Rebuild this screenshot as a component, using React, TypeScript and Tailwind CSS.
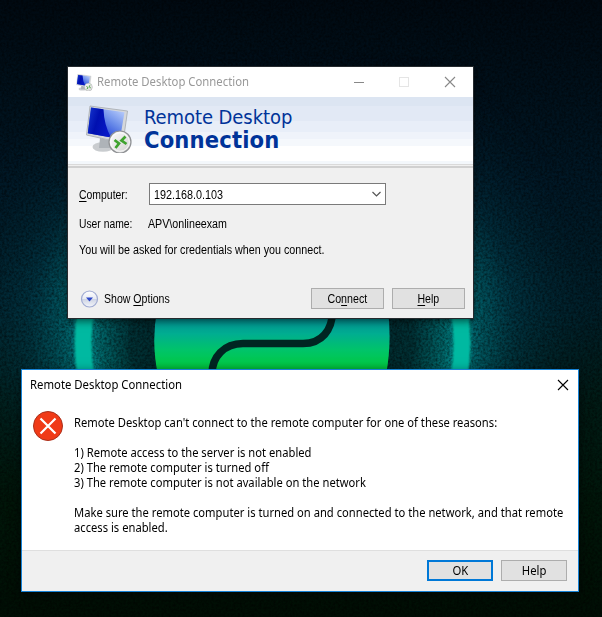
import type { ReactNode } from "react";

const segoe = "font-['Noto_Sans','Open_Sans',sans-serif]";
const sans = "font-['Liberation_Sans',Arial,sans-serif]";
const tahoma = "font-['DejaVu_Sans_Condensed','DejaVu_Sans',sans-serif]";

function Wallpaper() {
  return (
    <svg className="absolute inset-0" width="602" height="617" viewBox="0 0 602 617" aria-hidden="true">
      <defs>
        <linearGradient id="sky" x1="0" y1="0" x2="0" y2="1">
          <stop offset="0" stopColor="#000a12" />
          <stop offset="0.3" stopColor="#001826" />
          <stop offset="0.5" stopColor="#00202a" />
          <stop offset="0.65" stopColor="#001c16" />
          <stop offset="0.82" stopColor="#00170a" />
          <stop offset="1" stopColor="#000f05" />
        </linearGradient>
        <radialGradient id="halo" gradientUnits="userSpaceOnUse" cx="272" cy="335" r="330">
          <stop offset="0.3" stopColor="#003f42" stopOpacity="0.3" />
          <stop offset="0.45" stopColor="#00575b" stopOpacity="0.6" />
          <stop offset="0.56" stopColor="#009092" stopOpacity="0.9" />
          <stop offset="0.63" stopColor="#006e78" stopOpacity="0.75" />
          <stop offset="0.74" stopColor="#004a5c" stopOpacity="0.45" />
          <stop offset="1" stopColor="#002030" stopOpacity="0" />
        </radialGradient>
        <linearGradient id="fade" x1="0" y1="0" x2="0" y2="1">
          <stop offset="0.08" stopColor="#000" />
          <stop offset="0.46" stopColor="#fff" />
          <stop offset="0.6" stopColor="#fff" />
          <stop offset="0.78" stopColor="#111" />
          <stop offset="0.95" stopColor="#000" />
        </linearGradient>
        <mask id="haloMask">
          <rect width="602" height="617" fill="url(#fade)" />
        </mask>
        <linearGradient id="emblem" gradientUnits="userSpaceOnUse" x1="0" y1="318" x2="0" y2="370">
          <stop offset="0" stopColor="#009296" />
          <stop offset="0.3" stopColor="#00ad91" />
          <stop offset="0.62" stopColor="#00c469" />
          <stop offset="0.85" stopColor="#00c84d" />
          <stop offset="1" stopColor="#00b936" />
        </linearGradient>
        <filter id="grain" x="0" y="0" width="100%" height="100%">
          <feTurbulence type="fractalNoise" baseFrequency="0.42" numOctaves="2" seed="4" />
          <feColorMatrix values="0 0 0 0 0  0 0 0 0 0  0 0 0 0 0  1.8 0 0 0 -0.6" />
        </filter>
        <filter id="soft"><feGaussianBlur stdDeviation="0.8" /></filter>
      </defs>
      <rect width="602" height="617" fill="url(#sky)" />
      <rect width="602" height="617" fill="url(#halo)" mask="url(#haloMask)" />
      <ellipse cx="272" cy="343" rx="145" ry="90" fill="#002b2d" opacity="0.55" filter="url(#soft)" />
      <rect width="602" height="617" filter="url(#grain)" opacity="0.55" />
      <circle cx="272.5" cy="343" r="189.5" fill="none" stroke="#00b9a1" strokeWidth="17" filter="url(#soft)" />
      <path d="M157 310Q151 343 158 375H386Q392 343 388 310Z" fill="url(#emblem)" />
      <path d="M212 374C212 357 224 343.5 243 343.5H303C322 343.5 332 330 332.5 312" fill="none" stroke="#002522" strokeWidth="7.5" />
    </svg>
  );
}

function Monitor({ size }: { size: number }) {
  return (
    <svg width={size} height={size} viewBox="0 0 48 48" aria-hidden="true" className="shrink-0">
      <defs>
        <linearGradient id="screen" gradientUnits="userSpaceOnUse" x1="18" y1="30" x2="36" y2="4">
          <stop offset="0" stopColor="#2748d8" />
          <stop offset="0.5" stopColor="#6c8eea" />
          <stop offset="1" stopColor="#b9cdfb" />
        </linearGradient>
        <linearGradient id="deep" x1="0" y1="0" x2="1" y2="0.4">
          <stop offset="0" stopColor="#1738cf" />
          <stop offset="0.5" stopColor="#0010b0" />
          <stop offset="1" stopColor="#0718c6" />
        </linearGradient>
        <linearGradient id="badge" x1="0" y1="0" x2="1" y2="1">
          <stop offset="0" stopColor="#fff" />
          <stop offset="1" stopColor="#cfcfcf" />
        </linearGradient>
      </defs>
      <ellipse cx="18" cy="42" rx="10.500" ry="4.800" fill="#c9cccf" />
      <path d="M15 33L27 36L25 43H14Z" fill="#aeb3b8" />
      <path d="M5 1L42.500 6L38 38L1.500 30Z" fill="#d5d7da" stroke="#a5a9ae" strokeWidth="0.8" />
      <path d="M6 2.500L39.500 7.300L35 34L2.800 28.300Z" fill="url(#screen)" />
      <path d="M6 2.500L18.500 4.300Q19 20 26 32.400L2.800 28.300Z" fill="url(#deep)" />
      <circle cx="35" cy="37" r="11" fill="url(#badge)" stroke="#8f9194" strokeWidth="1.2" />
      <circle cx="35" cy="37" r="9.300" fill="none" stroke="#fff" strokeWidth="0.8" />
      <path d="M29.500 35L34 38.500L30.500 43M40.500 31.500L36.500 35.500L41.500 39" fill="none" stroke="#3fa32f" strokeWidth="2.700" />
    </svg>
  );
}

function CloseMark({ color }: { color: string }) {
  return (
    <svg width="12" height="12" viewBox="0 0 12 12" aria-hidden="true">
      <path d="M1 1L11 11M11 1L1 11" stroke={color} strokeWidth="1.1" fill="none" />
    </svg>
  );
}

function Button({ children, className }: { children: ReactNode; className: string }) {
  return (
    <button type="button" className={`flex h-[21px] items-center justify-center bg-[#e1e1e1] ${className}`}>
      {children}
    </button>
  );
}

function ConnectionWindow() {
  return (
    <section className={`absolute top-[67px] left-[68px] flex h-[251px] w-[405px] flex-col bg-[#f0f0f0] text-[12px] text-black shadow-[0_0_0_1px_#252a2e,0_3px_8px_#0009] ${sans}`}>
      <header className={`flex h-[30px] shrink-0 items-center bg-white pl-2 text-[#999] ${segoe}`}>
        <Monitor size={17} />
        <h1 className="ml-1 flex-1 origin-left scale-x-[0.944]">Remote Desktop Connection</h1>
        <div className="mr-[35px] h-px w-[10px] bg-[#888]" />
        <div className="mr-[35px] size-[10px] border border-[#e5e5e5]" />
        <div className="mr-[17px]"><CloseMark color="#888" /></div>
      </header>
      <div className="flex h-[67px] shrink-0 bg-[linear-gradient(#dce5f2_0_9px,#e2e9f5_9px_24px,#e8eef8_24px_35px,#eff3fa_35px_42px,#f5f8fc_42px_49px,#fff_49px_64px,#f3f7fb_64px)] pl-[17px]">
        <div className="mt-[8px]"><Monitor size={48} /></div>
        <div className={`mt-[9px] ml-[11px] text-[#003399] ${tahoma}`}>
          <div className="text-[20px] leading-[23px] tracking-[-0.07px]">Remote Desktop</div>
          <div className="text-[23.5px] leading-[22px] font-bold tracking-[0.15px]">Connection</div>
        </div>
      </div>
      <div className="mb-[1px] h-px shrink-0 bg-[#dadada]" />
      <div className="h-[2px] shrink-0 bg-[#d0d0d0]" />
      <div className="flex flex-1 flex-col pl-[11px]">
        <div className="mt-[15px] flex h-[22px] items-center">
          <span className="w-[70px] origin-left scale-x-[0.87] pt-[2px]"><u className="underline-offset-2">C</u>omputer:</span>
          <div className="flex h-[22px] w-[237px] items-center justify-between border border-[#7a7a7a] bg-white pr-[3px] pl-1">
            <span className="origin-left scale-x-[0.9] pt-px">192.168.0.103</span>
            <svg width="11" height="7" viewBox="0 0 11 7" aria-hidden="true">
              <path d="M1.500 1L5.500 5L9.500 1" fill="none" stroke="#555" strokeWidth="1.200" />
            </svg>
          </div>
        </div>
        <div className="mt-[11px] flex h-4 items-center">
          <span className="w-[69px] origin-left scale-x-[0.86]">User name:</span>
          <span className="origin-left scale-x-[0.89]">APV\onlineexam</span>
        </div>
        <p className="mt-[10px] h-4 origin-left scale-x-[0.895] leading-4">You will be asked for credentials when you connect.</p>
        <div className="mt-[30px] flex h-[21px] items-center">
          <svg width="20" height="20" viewBox="0 0 20 20" aria-hidden="true" className="ml-px">
            <defs>
              <linearGradient id="knob" x1="0" y1="0" x2="0" y2="1">
                <stop offset="0" stopColor="#fff" />
                <stop offset="0.48" stopColor="#e8ebf3" />
                <stop offset="0.5" stopColor="#cdd3e3" />
                <stop offset="1" stopColor="#f4f6fb" />
              </linearGradient>
            </defs>
            <circle cx="9.500" cy="10" r="8" fill="url(#knob)" stroke="#a0abd2" strokeWidth="1.200" />
            <path d="M6 8.500H13L9.500 12.500Z" fill="#2f49c8" />
          </svg>
          <span className="ml-1 flex-1 origin-left scale-x-[0.88]">Show <u className="underline-offset-2">O</u>ptions</span>
          <Button className="mr-2 w-[73px] border border-[#adadad]">
            <span className="scale-x-[0.89] pt-px">Co<u className="underline-offset-2">n</u>nect</span>
          </Button>
          <Button className="mr-2 w-[73px] border border-[#adadad]">
            <span className="scale-x-[0.88] pt-px"><u className="underline-offset-2">H</u>elp</span>
          </Button>
        </div>
      </div>
    </section>
  );
}

function ErrorDialog() {
  return (
    <section className={`absolute top-[369px] left-[21px] flex h-[223px] w-[558px] flex-col border border-[#1883d7] bg-white text-[12px] text-black shadow-[0_3px_10px_#0008] ${segoe}`}>
      <header className="flex h-[30px] shrink-0 items-center justify-between pr-[9px] pl-2">
        <h2 className="origin-left scale-x-[0.944]">Remote Desktop Connection</h2>
        <CloseMark color="#000" />
      </header>
      <div className="flex flex-1 pt-[11px] pl-[10px]">
        <svg width="32" height="32" viewBox="0 0 32 32" aria-hidden="true" className="shrink-0">
          <circle cx="16" cy="15" r="14.500" fill="#f03a17" stroke="#a9301c" strokeWidth="1" />
          <path d="M8.500 7.500L23.500 22.500M23.500 7.500L8.500 22.500" stroke="#fff" strokeWidth="2.200" />
        </svg>
        <div className="mt-[4px] ml-[10px] origin-left scale-x-[0.933] leading-[15px] whitespace-nowrap">
          <p>Remote Desktop can't connect to the remote computer for one of these reasons:</p>
          <p className="mt-[15px]">1) Remote access to the server is not enabled</p>
          <p>2) The remote computer is turned off</p>
          <p>3) The remote computer is not available on the network</p>
          <p className="mt-[15px]">Make sure the remote computer is turned on and connected to the network, and that remote<br />access is enabled.</p>
        </div>
      </div>
      <footer className="flex h-[41px] shrink-0 items-start justify-end gap-2 border-t border-[#dfdfdf] bg-[#f0f0f0] pt-[9px] pr-[11px]">
        <Button className="w-[66px] border-2 border-[#0078d7]"><span className="scale-x-[0.94] pt-px">OK</span></Button>
        <Button className="w-[66px] border border-[#adadad]"><span className="scale-x-[0.94] pt-px">Help</span></Button>
      </footer>
    </section>
  );
}

export default function App() {
  return (
    <main className="relative h-[617px] w-[602px] overflow-hidden bg-[#001018]">
      <Wallpaper />
      <ConnectionWindow />
      <ErrorDialog />
    </main>
  );
}
